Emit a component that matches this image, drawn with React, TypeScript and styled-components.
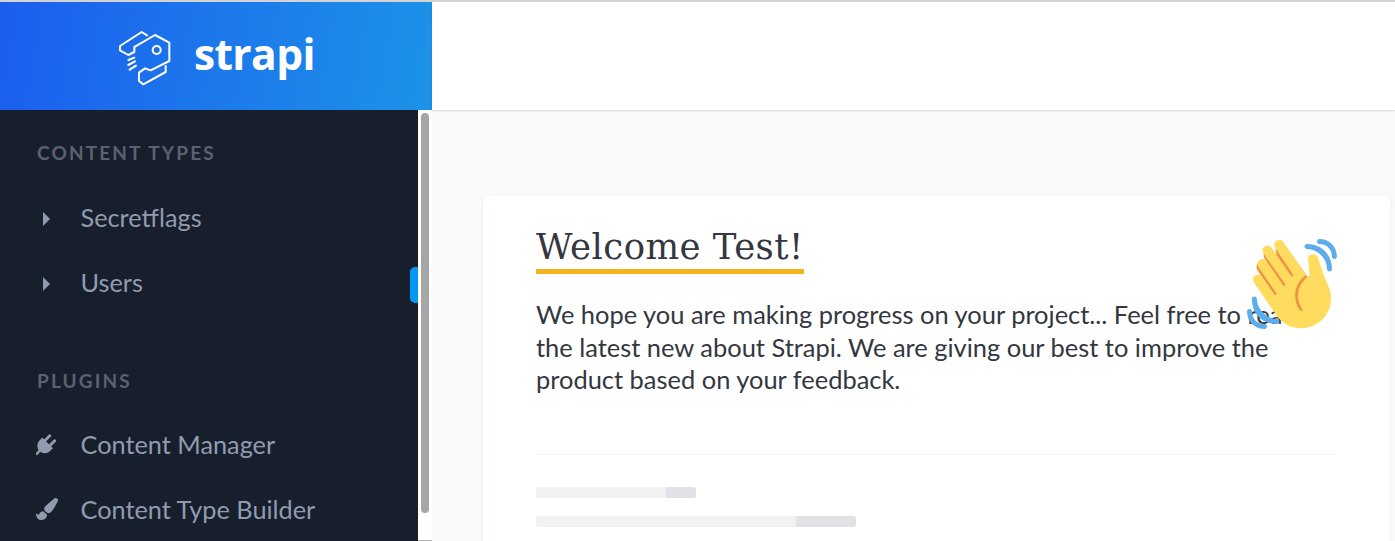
import React from 'react';
import styled, { createGlobalStyle } from 'styled-components';
import { FaPaintBrush } from 'react-icons/fa';

const GlobalStyle = createGlobalStyle`
  html, body {
    margin: 0;
    height: 100%;
    overflow: hidden;
    background: #fff;
    font-family: Lato, "Liberation Sans", sans-serif;
  }
`;

const Page = styled.div`
  width: 1395px;
  height: 541px;
  display: grid;
  grid-template-columns: 432px 1fr;
  grid-template-rows: 108px 1fr;
  border-top: 2px solid #d3d3d5;
  box-sizing: border-box;
  overflow: hidden;
`;

const Brand = styled.div`
  display: flex;
  align-items: center;
  padding-left: 100px;
  background: linear-gradient(100deg, #1c5dee 0%, #1c93e8 100%);
`;

const BrandName = styled.span`
  margin: -6px 0 0 -6px;
  color: #fff;
  font-family: "Open Sans", sans-serif;
  font-size: 42.5px;
  font-weight: 700;
  letter-spacing: -0.6px;
`;

const TopBar = styled.div`
  background: #fff;
  box-shadow: 0 1px 2px rgba(40, 42, 49, 0.16);
  position: relative;
`;

const SideColumn = styled.div`
  display: flex;
  min-height: 0;
  overflow: hidden;
`;

const Nav = styled.nav`
  width: 418px;
  padding-top: 31px;
  box-sizing: border-box;
  background: #171f2d;
`;

const ScrollTrack = styled.div`
  width: 14px;
  padding-top: 3px;
  box-sizing: border-box;
  display: flex;
  justify-content: center;
  align-items: flex-start;
  background: #fff;
  border-bottom: 1px solid #b5b5b5;
`;

const ScrollThumb = styled.div`
  width: 8px;
  height: 400px;
  border-radius: 4px;
  background: #a6a6a6;
`;

const SectionTitle = styled.h3<{ $gap?: number; $after: number }>`
  margin: ${({ $gap }) => $gap ?? 0}px 0 ${({ $after }) => $after}px 37px;
  color: #5b626f;
  font-size: 19px;
  line-height: 23px;
  font-weight: 700;
  letter-spacing: 2.15px;
  text-transform: uppercase;
`;

const Item = styled.div`
  position: relative;
  height: 65px;
  display: flex;
  align-items: center;
  color: #919bae;
  font-size: 25.3px;
`;

const IconSlot = styled.span`
  width: 80.5px;
  padding-left: 36px;
  box-sizing: border-box;
  display: flex;
  flex-shrink: 0;
  color: #919bae;
`;

const Caret = styled.i`
  margin: 4px 0 0 7px;
  border-left: 7px solid #919bae;
  border-top: 7px solid transparent;
  border-bottom: 7px solid transparent;
`;

const ActiveMark = styled.span`
  position: absolute;
  right: 0;
  top: 18px;
  width: 8px;
  height: 36px;
  border-radius: 5px 0 0 5px;
  background: #0097f7;
`;

const Main = styled.main`
  background: #fafafb;
  padding: 86px 5px 0 51px;
  min-height: 0;
  overflow: hidden;
`;

const Card = styled.section`
  position: relative;
  height: 500px;
  padding: 29px 54px 0 53px;
  box-sizing: border-box;
  border-radius: 6px;
  background: #fff;
  box-shadow: 0 2px 4px #e3e9f3;
`;

const Heading = styled.h1`
  display: inline-block;
  margin: 0;
  border-bottom: 5px solid #f0b41e;
  color: #333740;
  font-family: "DejaVu Serif", serif;
  font-size: 35.5px;
  font-weight: 400;
  line-height: 44px;
  letter-spacing: 0.45px;
`;

const Lead = styled.p`
  width: 790px;
  margin: 24px 0 0;
  color: #333740;
  font-size: 25.45px;
  line-height: 32.5px;
`;

const Wave = styled.svg`
  position: absolute;
  top: 43px;
  right: 53px;
  width: 90px;
  height: 90px;
`;

const Divider = styled.hr`
  height: 1px;
  margin: 58px 0 32px;
  border: 0;
  background: #f6f6f7;
`;

const Skeleton = styled.div<{ $width: number; $tail: number }>`
  width: ${({ $width }) => $width}px;
  height: 11px;
  margin-bottom: 18px;
  display: flex;
  justify-content: flex-end;
  border-radius: 3px;
  overflow: hidden;
  background: #f1f1f2;

  &::after {
    content: '';
    width: ${({ $tail }) => $tail}px;
    background: #e2e1e6;
  }
`;

const StrapiMark = () => (
  <svg width="100" height="80" viewBox="0 0 300 240" fill="none" stroke="#fff" strokeWidth="6" strokeLinejoin="round" strokeLinecap="round">
    <path d="M105 92 165 57l43 23v55l-56 28-17-6-18 13v25l13 10 67-37v-18" />
    <path d="M141 58 125 48 60 90v13l25 14 18-9V92" />
    <circle cx="170" cy="102" r="12" />
    <path d="M85 132l18-7M85 147l20-11M89 161l19-12" />
  </svg>
);

const PlugIcon = () => (
  <svg width="22" height="22" viewBox="0 0 22 22" fill="currentColor">
    <g transform="translate(9.5 12) rotate(45)">
      <rect x="-5" y="-11" width="3" height="9" rx="1.5" />
      <rect x="2" y="-11" width="3" height="9" rx="1.5" />
      <path d="M-7.5-3h15v4a7.500 7.500 0 0 1-15 0z" />
      <rect x="-1.300" y="7" width="2.600" height="7.500" />
    </g>
  </svg>
);

const App: React.FC = () => (
  <>
    <GlobalStyle />
    <Page>
      <Brand>
        <StrapiMark />
        <BrandName>strapi</BrandName>
      </Brand>
      <TopBar />
      <SideColumn>
        <Nav>
          <SectionTitle $after={20}>Content Types</SectionTitle>
          <Item>
            <IconSlot><Caret /></IconSlot>
            Secretflags
          </Item>
          <Item>
            <IconSlot><Caret /></IconSlot>
            Users
            <ActiveMark />
          </Item>
          <SectionTitle $gap={55} $after={19}>Plugins</SectionTitle>
          <Item>
            <IconSlot><PlugIcon /></IconSlot>
            Content Manager
          </Item>
          <Item>
            <IconSlot><FaPaintBrush size={22} /></IconSlot>
            Content Type Builder
          </Item>
        </Nav>
        <ScrollTrack>
          <ScrollThumb />
        </ScrollTrack>
      </SideColumn>
      <Main>
        <Card>
          <Heading>Welcome Test!</Heading>
          <Lead>
            We hope you are making progress on your project... Feel free to read the latest new about Strapi. We are giving our best to improve the product based on your feedback.
          </Lead>
          <Wave viewBox="0 0 36 36">
            <path fill="#EF9645" d="M4.861 9.147c.94-.657 2.357-.531 3.201.166l-.968-1.407c-.779-1.111-.5-2.313.612-3.093 1.112-.777 4.263 1.312 4.263 1.312-.786-1.122-.639-2.544.483-3.331 1.122-.784 2.67-.513 3.456.611l10.42 14.72L25 31l-11.083-4.042L4.25 12.625c-.793-1.129-.519-2.686.611-3.478z" />
            <path fill="#FFDC5D" d="M2.695 17.336s-1.132-1.65.519-2.781c1.649-1.131 2.78.518 2.78.518l5.251 7.658c.181-.302.379-.6.6-.894L4.557 11.21s-1.131-1.649.519-2.78c1.649-1.131 2.78.518 2.78.518l6.855 9.997c.255-.208.516-.417.785-.622L6.549 5.732s-1.131-1.649.519-2.78c1.649-1.131 2.78.518 2.78.518l7.947 11.589c.292-.179.581-.334.871-.498L11.238 3.46s-1.131-1.649.518-2.78c1.649-1.131 2.78.518 2.78.518l7.854 11.454 1.194 1.742c-4.948 3.394-5.419 9.779-2.592 13.902.565.825 1.39.26 1.39.26-3.393-4.949-2.357-10.51 2.592-13.903L24.515 8.62s-.545-1.924 1.378-2.47c1.924-.545 2.47 1.379 2.47 1.379l1.685 5.004c.668 1.984 1.379 3.961 2.32 5.831 2.657 5.28 1.07 11.842-3.94 15.279-5.465 3.747-12.936 2.355-16.684-3.11L2.695 17.336z" />
            <path fill="#5DADEC" d="M12 32.042C8 32.042 3.958 28 3.958 24c0-.553-.405-1-.958-1s-1.042.447-1.042 1C1.958 30 6 34.042 12 34.042c.553 0 1-.447 1-1s-.447-1-1-1z" />
            <path fill="#5DADEC" d="M7 34c-3 0-5-2-5-5 0-.553-.447-1-1-1s-1 .447-1 1c0 4 3 7 7 7 .553 0 1-.447 1-1s-.447-1-1-1zM24 2c-.552 0-1 .448-1 1s.448 1 1 1c4 0 8 3.589 8 8 0 .552.448 1 1 1s1-.448 1-1c0-5.514-4-10-10-10z" />
            <path fill="#5DADEC" d="M29 .042c-.552 0-1 .406-1 .958s.448 1.042 1 1.042c3 0 4.958 2.225 4.958 4.958 0 .552.489 1 1.042 1s.958-.448.958-1C35.958 3.163 33 .042 29 .042z" />
          </Wave>
          <Divider />
          <Skeleton $width={160} $tail={30} />
          <Skeleton $width={320} $tail={60} />
        </Card>
      </Main>
    </Page>
  </>
);

export default App;
